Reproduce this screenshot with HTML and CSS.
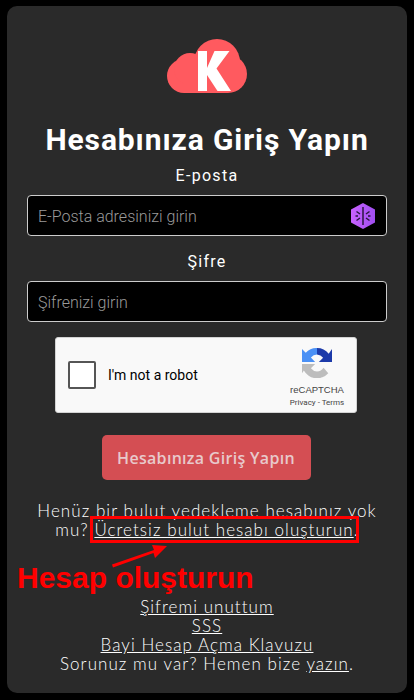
FILE: index.html
```html
<!DOCTYPE html>
<html lang="tr">
<head>
<meta charset="utf-8">
<title>Hesabınıza Giriş Yapın</title>
<link rel="stylesheet" href="styles.css">
</head>
<body>
<main class="card">
  <svg class="logo" width="80" height="54" viewBox="0 0 80 54" aria-hidden="true">
    <g fill="#ff5a5f">
      <circle cx="50" cy="23" r="23"/>
      <circle cx="61" cy="35" r="19"/>
      <circle cx="17" cy="37" r="17"/>
      <circle cx="23" cy="30" r="16"/>
      <rect x="17" y="30" width="44" height="24"/>
    </g>
    <path fill="#fff" d="M31 12H40V29L47.500 12H62.500L49.500 29.500L64 52H50.500L40 36V52H31Z"/>
  </svg>
  <h1 class="title">Hesabınıza Giriş Yapın</h1>
  <label class="label">E-posta</label>
  <div class="field">
    <span class="placeholder">E-Posta adresinizi girin</span>
    <svg class="ext-icon" width="26" height="28" viewBox="0 0 26 28" aria-hidden="true">
      <defs><linearGradient id="g" x1="0" y1="0" x2="1" y2="0"><stop offset="0" stop-color="#c862ff"/><stop offset="1" stop-color="#a04ef0"/></linearGradient></defs>
      <path fill="url(#g)" d="M13 1L25 7.500V20.500L13 27L1 20.500V7.500Z"/>
      <path stroke="#2a1640" stroke-width="1.500" fill="none" d="M13 5V23M6.500 9.500L10 12M19.500 9.500L16 12M6.500 18.500L10 16M19.500 18.500L16 16M5.500 14H8M18 14H20.500"/>
    </svg>
  </div>
  <label class="label label-second">Şifre</label>
  <div class="field">
    <span class="placeholder">Şifrenizi girin</span>
  </div>
  <div class="captcha">
    <span class="checkbox"></span>
    <span class="robot">I'm not a robot</span>
    <div class="brand">
      <svg width="30" height="30" viewBox="0 0 32 32" aria-hidden="true">
        <path fill="#4a90f5" d="M0 15V1L4 5A16 16 0 0 1 16 0V7A9 9 0 0 0 9.500 10L14 15Z"/>
        <path fill="#1c3aa9" d="M16 0A16 16 0 0 1 28.500 6L32 1V15H18L22.500 10.500A9 9 0 0 0 16 7Z"/>
        <path fill="#bdbdbd" d="M0 17H14L9.500 21.500A9 9 0 0 0 16 25A9 9 0 0 0 23 21L28 27A16 16 0 0 1 2 24L0 27Z"/>
      </svg>
      <span class="brand-name">reCAPTCHA</span>
      <span class="brand-links">Privacy - Terms</span>
    </div>
  </div>
  <button class="submit" type="button">Hesabınıza Giriş Yapın</button>
  <p class="signup">Henüz bir bulut yedekleme hesabınız yok mu? <a class="link" href="#">Ücretsiz bulut hesabı oluşturun</a>.</p>
  <div class="links">
    <a class="link" href="#">Şifremi unuttum</a>
    <a class="link" href="#">SSS</a>
    <a class="link" href="#">Bayi Hesap Açma Klavuzu</a>
    <span>Sorunuz mu var? Hemen bize <a class="link" href="#">yazın</a>.</span>
  </div>
</main>
<div class="mark-box"></div>
<svg class="mark-arrow" width="60" height="32" viewBox="0 0 60 32" aria-hidden="true">
  <path fill="#f00" d="M1 21.500L43 7L41 2L56 3L44 15L42.500 10L2 24.500Z"/>
</svg>
<span class="mark-text">Hesap oluşturun</span>
</body>
</html>
```
FILE: styles.css
```css
* { box-sizing: border-box; }
html, body { margin: 0; height: 700px; overflow: hidden; }
body { background: #000; padding: 6px 7px; position: relative; font-family: "Lato", sans-serif; color: #fff; }
.card {
  width: 400px;
  height: 687px;
  background: #2a2a2a;
  border-radius: 10px;
  padding: 33px 20px 0;
  display: flex;
  flex-direction: column;
  align-items: center;
}
.logo { display: block; }
.title {
  font-family: "Roboto", sans-serif;
  font-weight: 700;
  font-size: 30px;
  line-height: 36px;
  letter-spacing: 0.900px;
  margin: 29px 0 0;
  white-space: nowrap;
}
.label {
  font-family: "Roboto", sans-serif;
  font-weight: 400;
  font-size: 16px;
  line-height: 20px;
  letter-spacing: 1.300px;
  margin-top: 8px;
  margin-bottom: 9px;
}
.label-second { margin-top: 16px; }
.field {
  width: 360px;
  height: 41px;
  background: #000;
  border: 1px solid #ccc;
  border-radius: 4px;
  padding: 1px 10px 0;
  display: flex;
  align-items: center;
  justify-content: space-between;
  flex: none;
}
.placeholder {
  font-family: "Roboto", sans-serif;
  font-weight: 300;
  font-size: 16px;
  color: #9a9a9a;
}
.captcha {
  width: 302px;
  height: 76px;
  flex: none;
  margin: 15px 2px 0 0;
  background: #f9f9f9;
  border: 1px solid #d3d3d3;
  border-radius: 3px;
  display: flex;
  align-items: center;
  padding-left: 12px;
  color: #000;
  font-family: "Roboto", sans-serif;
}
.checkbox {
  width: 28px;
  height: 28px;
  background: #fff;
  border: 2px solid #555;
  border-radius: 2px;
  flex: none;
}
.robot { font-size: 14px; margin-left: 12px; }
.brand {
  margin-left: auto;
  width: 70px;
  margin-right: 4px;
  padding-top: 5px;
  display: flex;
  flex-direction: column;
  align-items: center;
  color: #444;
}
.brand svg { margin-bottom: 5px; }
.brand-name { font-size: 9.500px; line-height: 13px; font-family: "Liberation Sans", sans-serif; }
.brand-links { font-size: 8px; line-height: 11px; margin-top: 1px; white-space: nowrap; }
.submit {
  width: 209px;
  height: 45px;
  flex: none;
  margin: 22px 2px 0 0;
  background: #d44e53;
  border: 0;
  border-radius: 5px;
  color: #e8c9cb;
  font-family: "Open Sans", sans-serif;
  font-weight: 600;
  font-size: 16px;
  letter-spacing: 0.300px;
}
.signup, .links {
  font-size: 17px;
  line-height: 19px;
  font-weight: 300;
  letter-spacing: 1.050px;
  text-align: center;
  color: #fff;
  width: 360px;
}
.signup { margin: 21px 0 0; }
.links {
  margin-top: 58px;
  display: flex;
  flex-direction: column;
  align-items: center;
}
.link { color: #fff; text-decoration: underline; }
.mark-box {
  position: absolute;
  left: 90px;
  top: 516px;
  width: 269px;
  height: 27px;
  border: 3px solid #f00;
}
.mark-arrow { position: absolute; left: 111px; top: 543px; }
.mark-text {
  position: absolute;
  left: 17px;
  top: 561px;
  font-family: "Liberation Sans", sans-serif;
  font-weight: 700;
  font-size: 30px;
  line-height: 34px;
  color: #f00;
  white-space: nowrap;
}
```
